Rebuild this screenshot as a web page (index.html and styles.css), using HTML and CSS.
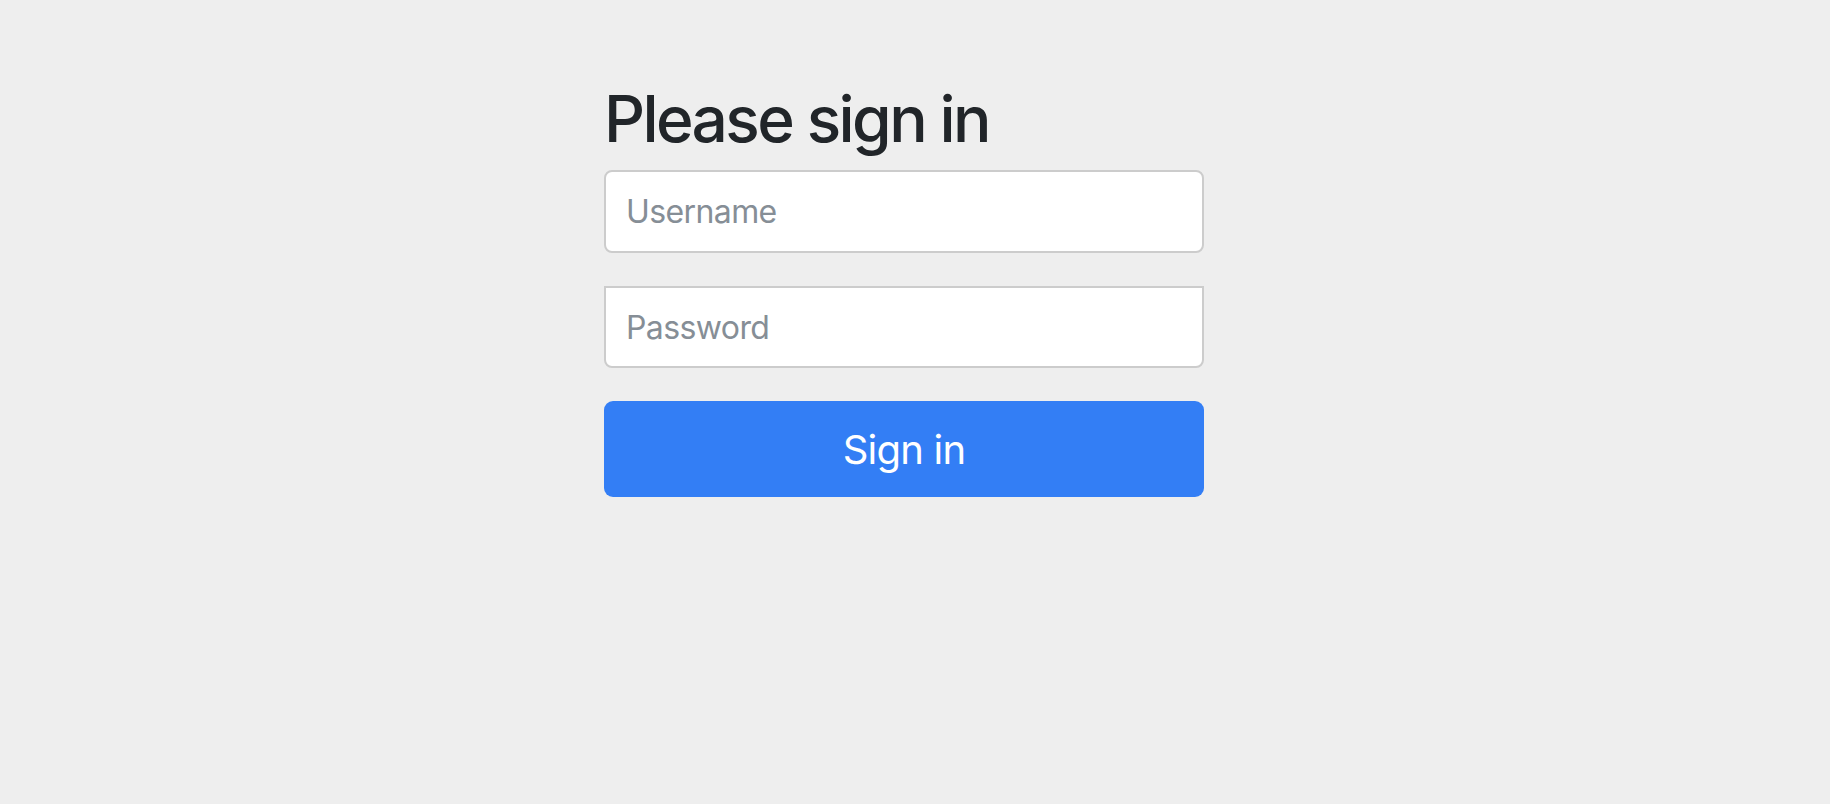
FILE: index.html
```html
<!DOCTYPE html>
<html lang="en">
<head>
<meta charset="utf-8">
<title>Please sign in</title>
<link rel="stylesheet" href="styles.css">
</head>
<body>
<div class="container">
  <form class="form-signin">
    <h2 class="form-signin-heading">Please sign in</h2>
    <p class="field"><input type="text" class="form-control username" placeholder="Username"></p>
    <p class="field"><input type="password" class="form-control password" placeholder="Password"></p>
    <button class="btn-primary" type="button">Sign in</button>
  </form>
</div>
</body>
</html>
```
FILE: styles.css
```css
html, body {
  margin: 0;
  padding: 0;
}
body {
  background: #eeeeee;
  font-family: Inter, "Noto Sans", "Liberation Sans", sans-serif;
  color: #212529;
  padding-top: 80px;
}
.container {
  display: flex;
  justify-content: center;
  padding-right: 22px;
}
.form-signin {
  width: 600px;
  display: flex;
  flex-direction: column;
}
.form-signin-heading {
  margin: 0 0 13px 0;
  font-size: 64px;
  font-weight: 500;
  line-height: 77px;
  letter-spacing: -2.6px;
  color: #212529;
}
.field {
  margin: 0 0 33px 0;
}
.form-control {
  display: block;
  box-sizing: border-box;
  width: 100%;
  height: 83px;
  padding: 0 20px;
  border: 2px solid #cccccc;
  border-radius: 8px;
  background: #ffffff;
  font-family: inherit;
  font-size: 32px;
  letter-spacing: -0.6px;
  color: #495057;
  outline: none;
}
.form-control.password {
  border-top-left-radius: 0;
  border-top-right-radius: 0;
  height: 82px;
}
.form-control::placeholder {
  color: #868e96;
  opacity: 1;
}
.btn-primary {
  display: block;
  width: 100%;
  height: 96px;
  border: none;
  border-radius: 9px;
  background: #337ef5;
  color: #ffffff;
  font-family: inherit;
  font-size: 40px;
  font-weight: 400;
  letter-spacing: -0.8px;
  cursor: pointer;
}
```
